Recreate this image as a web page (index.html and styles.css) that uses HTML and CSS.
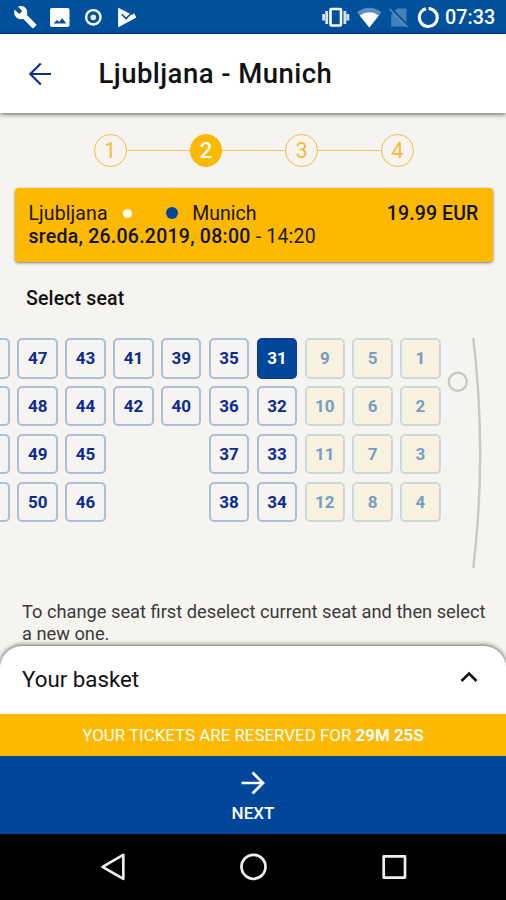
FILE: index.html
```html
<!DOCTYPE html>
<html lang="en">
<head>
<meta charset="utf-8">
<title>Ljubljana - Munich</title>
<link rel="stylesheet" href="styles.css">
</head>
<body>
<div class="screen">
  <div class="status">
    <svg class="status-icons" width="150" height="34" viewBox="0 0 150 34" fill="#fff">
      <path transform="translate(13.2 5) scale(1.01)" d="M22.7 19l-9.1-9.1c.9-2.3.4-5-1.500-6.900-2-2-5-2.400-7.400-1.300L9 6 6 9 1.600 4.700C.4 7.100.9 10.100 2.900 12.100c1.900 1.900 4.600 2.400 6.900 1.500l9.100 9.100c.4.4 1 .4 1.400 0l2.300-2.300c.5-.4.5-1.100.1-1.400z"/>
      <path d="M52 8h15.500a2 2 0 0 1 2 2v15a2 2 0 0 1-2 2H52a2 2 0 0 1-2-2V10a2 2 0 0 1 2-2zm1.500 15.500h12.800l-4.100-5.200-3 3.700-2.200-2z" fill-rule="evenodd"/>
      <circle cx="93.300" cy="17.300" r="7.200" fill="none" stroke="#fff" stroke-width="2.400"/>
      <circle cx="93.300" cy="17.300" r="2.900" fill="#e3ecf6"/>
      <path d="M118.500 8.300L136 17.300 118.500 26.800z" stroke="#fff" stroke-width=".8" stroke-linejoin="round"/>
      <path d="M121.800 14.300l4.300 4.200 8.400-8.500" fill="none" stroke="#00509c" stroke-width="1.600"/>
      <path d="M127.500 19.500l6.500-6.300 2 3.600-8 5z"/>
    </svg>
    <svg class="status-icons" width="120" height="34" viewBox="320 0 120 34">
      <rect x="330.500" y="9" width="10.500" height="16.500" rx="1" fill="none" stroke="#fff" stroke-width="2.600"/>
      <path d="M326.700 11v13M344.900 11v13M323.600 14v6.500M347.900 14v6.500" stroke="#d5e0f0" stroke-width="2.800"/>
      <path d="M357 12.200Q369.300 3.300 381.500 12.200L369.300 27.500z" fill="#5c8dc3"/>
      <path d="M359.800 15.400Q369.300 9 378.800 15.400L369.300 27.500z" fill="#fff"/>
      <path d="M397 8.500h9.500v18h-15.300v-12z" fill="#4381bb"/>
      <path d="M391 8.500l18 18.500" stroke="#00509c" stroke-width="2.500"/>
      <path d="M389.500 9l18 18" stroke="#5a8fc4" stroke-width="1.300"/>
      <circle cx="428.300" cy="17.500" r="9" fill="none" stroke="#fff" stroke-width="3.200" stroke-dasharray="53.500 3.050" transform="rotate(-88 428.300 17.500)"/>
    </svg>
    <span class="clock">07:33</span>
  </div>

  <header class="appbar">
    <svg class="back" width="24" height="24" viewBox="0 0 24 24" fill="none" stroke="#0b2f9b" stroke-width="2.200"><path d="M23 12H2.500M12.800 1.500L2.300 12l10.500 10.500"/></svg>
    <h1 class="title">Ljubljana - Munich</h1>
  </header>

  <main class="content">
    <div class="steps">
      <span class="step">1</span><span class="line"></span>
      <span class="step step-on">2</span><span class="line"></span>
      <span class="step">3</span><span class="line"></span>
      <span class="step">4</span>
    </div>

    <section class="trip">
      <div class="trip-row">
        <span class="from">Ljubljana</span>
        <span class="dot dot-white"></span>
        <span class="dot dot-blue"></span>
        <span class="to">Munich</span>
        <span class="price">19.99 EUR</span>
      </div>
      <div class="trip-time"><b>sreda, 26.06.2019, 08:00</b> - 14:20</div>
    </section>

    <h2 class="select">Select seat</h2>

    <section class="bus">
      <div class="seats">
        <span class="seat"></span><span class="seat">47</span><span class="seat">43</span><span class="seat">41</span><span class="seat">39</span><span class="seat">35</span><span class="seat chosen">31</span><span class="seat taken">9</span><span class="seat taken">5</span><span class="seat taken">1</span>
        <span class="seat"></span><span class="seat">48</span><span class="seat">44</span><span class="seat">42</span><span class="seat">40</span><span class="seat">36</span><span class="seat">32</span><span class="seat taken">10</span><span class="seat taken">6</span><span class="seat taken">2</span>
        <span class="seat"></span><span class="seat">49</span><span class="seat">45</span><span></span><span></span><span class="seat">37</span><span class="seat">33</span><span class="seat taken">11</span><span class="seat taken">7</span><span class="seat taken">3</span>
        <span class="seat"></span><span class="seat">50</span><span class="seat">46</span><span></span><span></span><span class="seat">38</span><span class="seat">34</span><span class="seat taken">12</span><span class="seat taken">8</span><span class="seat taken">4</span>
      </div>
      <svg class="front" width="44" height="232" viewBox="444 338 44 232" fill="none" stroke="#c9c8c6" stroke-width="2.400">
        <circle cx="457.800" cy="381.700" r="9"/>
        <path d="M473.300 338Q487 453 473.300 568"/>
      </svg>
    </section>

    <p class="hint">To change seat first deselect current seat and then select<br>a new one.</p>
  </main>

  <section class="basket">
    <span class="basket-label">Your basket</span>
    <svg width="18" height="12" viewBox="0 0 18 12" fill="none" stroke="#111" stroke-width="2.500"><path d="M1.500 10L9 2.500l7.500 7.500"/></svg>
  </section>
  <div class="reserved"><span>YOUR TICKETS ARE RESERVED FOR <b>29M 25S</b></span></div>
  <div class="next">
    <svg width="24" height="24" viewBox="0 0 24 24" fill="none" stroke="#fff" stroke-width="2.700"><path d="M.5 12h21M11.500 1.500L22 12 11.500 22.500"/></svg>
    <span class="next-label">NEXT</span>
  </div>
  <nav class="nav">
    <svg width="506" height="66" viewBox="0 834 506 66" fill="none" stroke="#eee" stroke-width="2.700" stroke-linejoin="round">
      <path d="M123.300 854.800v24L102.500 866.800z"/>
      <circle cx="253.500" cy="866.800" r="12"/>
      <rect x="383.700" y="856.300" width="21.300" height="21.300"/>
    </svg>
  </nav>
</div>
</body>
</html>
```

FILE: styles.css
```css
* { box-sizing: border-box; }
body { margin: 0; font-family: Roboto, "Liberation Sans", sans-serif; color: #111; background: #f5f4f0; }
.screen { width: 506px; height: 900px; display: flex; flex-direction: column; overflow: hidden; white-space: nowrap; }
.screen > * { flex-shrink: 0; }
svg { display: block; }

.status { height: 34px; background: #00509c; border-bottom: 1px solid #0a319e; display: flex; }
.status-icons + .status-icons { margin-left: 170px; }
.clock { margin-left: 5px; color: #fff; font-size: 19.800px; font-weight: 500; line-height: 36px; }

.appbar { height: 79px; background: #fff; box-shadow: 0 1px 5px rgba(0,0,0,.65); display: flex; align-items: center; padding-left: 28px; position: relative; z-index: 1; }
.title { margin: 0 0 0 46.500px; font-size: 27.500px; letter-spacing: .45px; font-weight: 500; line-height: 32px; }

.content { height: 533px; background: #f5f4f0; overflow: hidden; }
.steps { display: flex; align-items: center; margin: 21px 0 0 94px; height: 33px; }
.step { width: 32.500px; height: 32.500px; border: 1.500px solid #fbb93c; border-radius: 50%; color: #fbb93c; font-size: 22px; line-height: 31px; text-align: center; }
.step-on { background: #fbb900; border-color: #fbb900; color: #fff; font-weight: 500; }
.line { width: 63.200px; height: 1.500px; background: #fbc067; }

.trip { margin: 21px 13.500px 0 14.500px; height: 74px; border-radius: 4px; background: #fcb900; box-shadow: 0 1px 3px rgba(0,0,0,.5); padding: 14px 14px 0; font-size: 19.500px; line-height: 23px; }
.trip b { font-weight: 500; }
.trip-row { display: flex; align-items: center; }
.trip-row, .trip-time { color: #1c1600; }
.trip-time { letter-spacing: .2px; }
.from, .to { font-weight: 400; }
.from { letter-spacing: .1px; }
.dot { border-radius: 50%; margin-top: -1px; }
.dot-white { width: 9px; height: 9px; background: #fff; margin-left: 15.500px; }
.dot-blue { width: 12px; height: 12px; background: #00479b; margin-left: 34px; margin-right: 14px; }
.price { margin-left: auto; font-weight: 500; letter-spacing: .12px; color: #111; }
.trip b { letter-spacing: .25px; color: #111; }

.select { margin: 25px 0 0 26px; font-size: 19.500px; letter-spacing: .15px; font-weight: 500; line-height: 24px; }

.bus { display: flex; margin-top: 27px; }
.seats { margin-left: -30.400px; display: grid; grid-template-columns: repeat(10, 40.500px); grid-auto-rows: 40.500px; gap: 7.350px; height: 232px; align-content: start; }
.seat { border: 2px solid #a9c0d8; border-radius: 5px; color: #0b2c8f; font-size: 17px; font-weight: 700; line-height: 37px; text-align: center; }
.chosen { background: #00479b; border-color: #0b3d9a; color: #fff; }
.taken { background: #f7f2df; border-color: #d0d8d6; color: #7a9cc2; }
.front { margin-left: 3px; }

.hint { margin: 31px 0 0 22px; font-size: 18.250px; line-height: 22px; color: #3a3a3a; }

.basket { height: 68px; background: #fff; border-radius: 22px 22px 0 0; box-shadow: 0 -1px 5px rgba(0,0,0,.6); display: flex; align-items: center; justify-content: space-between; padding: 0 28px 2px 22px; font-size: 22.300px; }
.basket svg { margin-top: -5px; }
.reserved { height: 42px; background: #fcb900; color: #fff; display: flex; align-items: center; justify-content: center; padding-bottom: 1px; font-size: 16.900px; position: relative; }
.reserved b { font-weight: 700; }
.next { height: 78px; background: #00479b; color: #fff; display: flex; flex-direction: column; align-items: center; padding-top: 15px; }
.next-label { font-size: 17px; line-height: 22px; margin-top: 7px; font-weight: 500; }
.nav { height: 66px; background: #000; }
```
